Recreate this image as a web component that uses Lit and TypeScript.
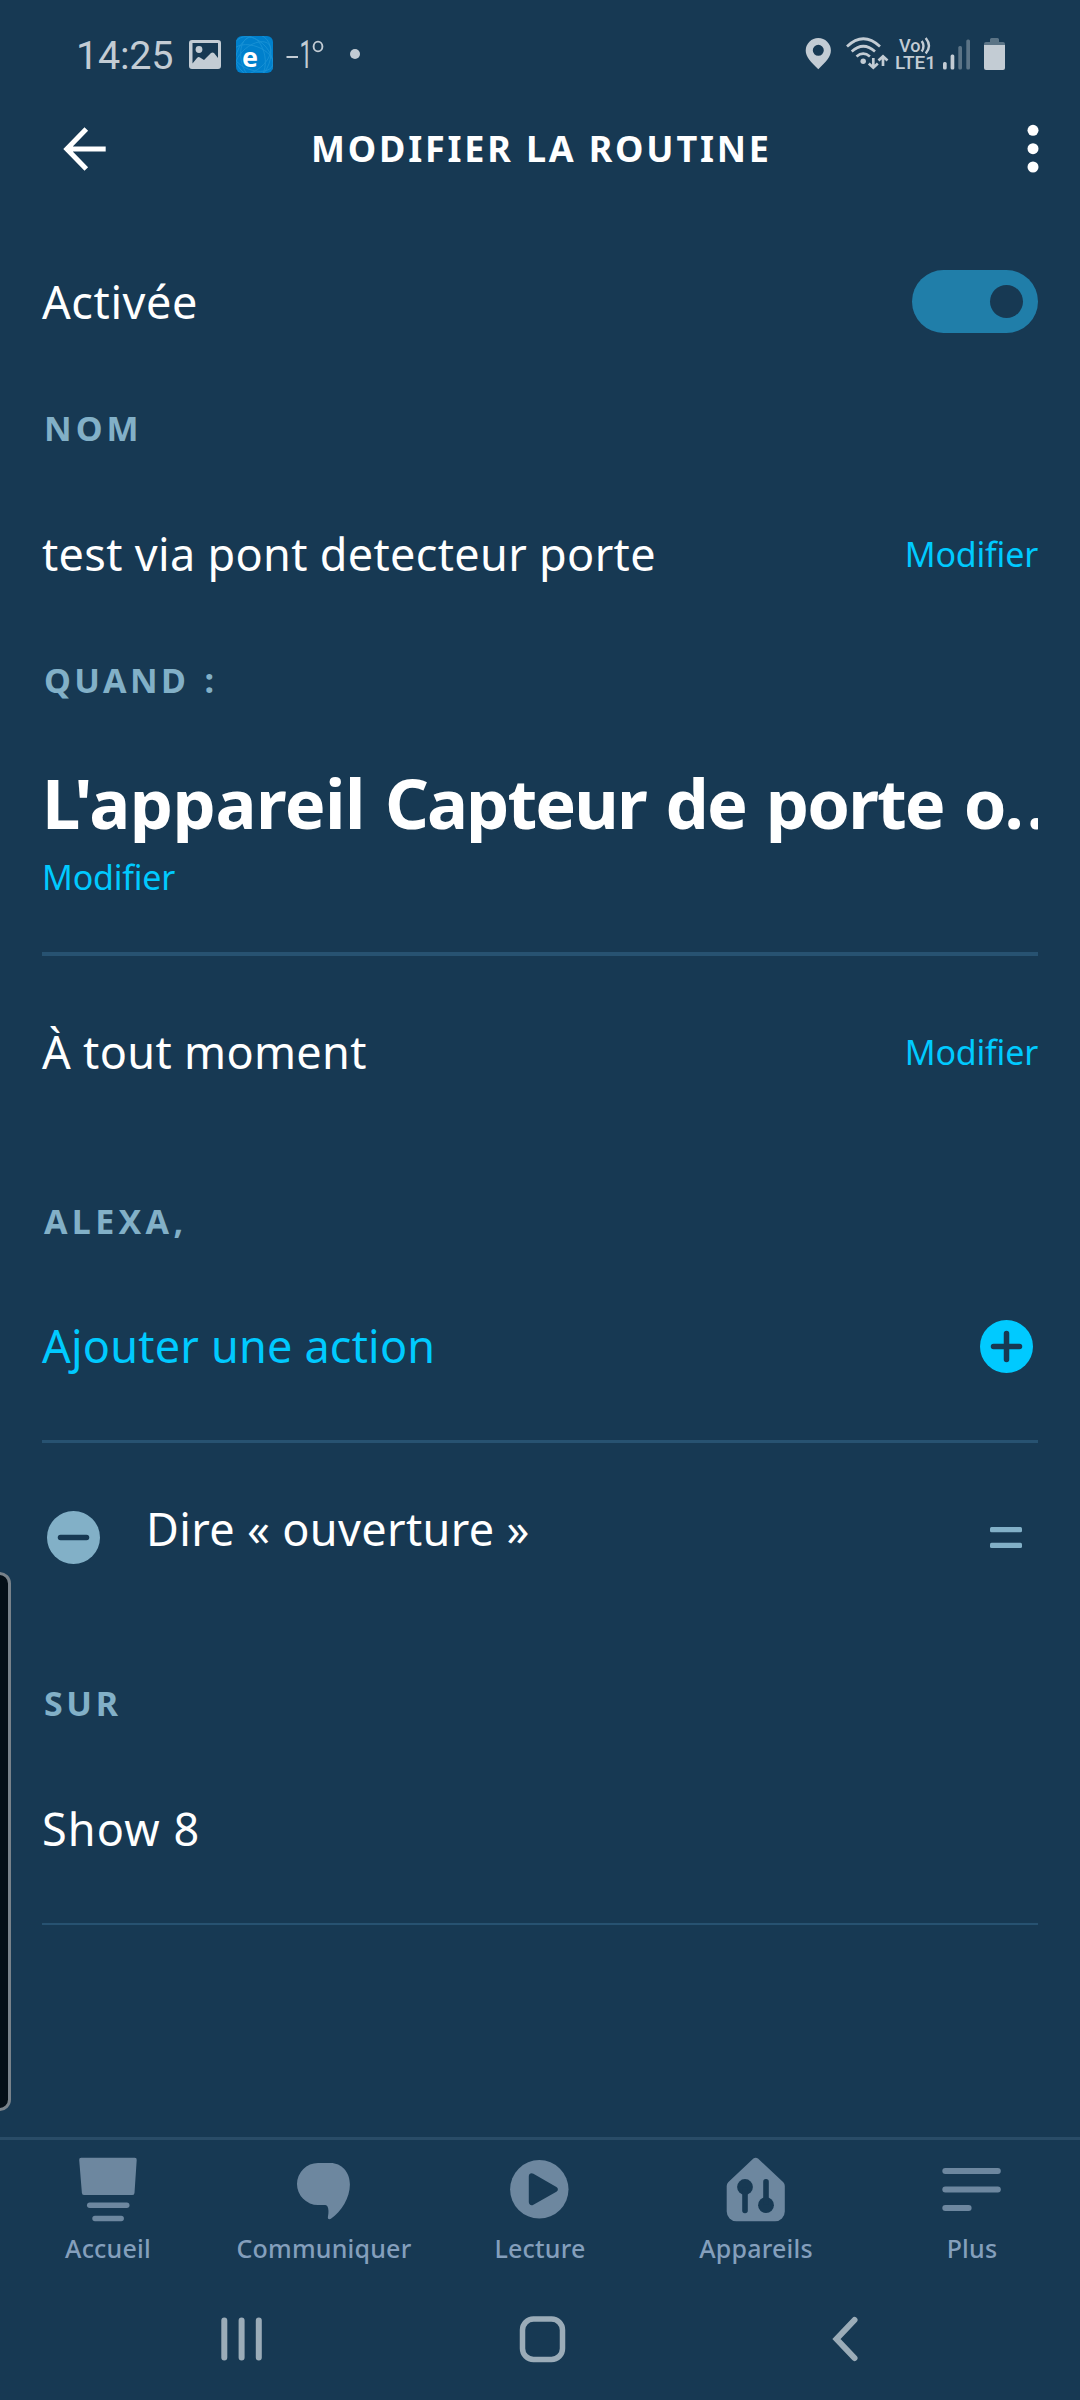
import { LitElement, html, css, svg } from "lit";
import { customElement, property } from "lit/decorators.js";

const BG = "#173953";

@customElement("status-bar")
class StatusBar extends LitElement {
  static styles = css`
    :host {
      display: flex;
      align-items: center;
      justify-content: space-between;
      height: 108px;
      padding: 0 75px;
      box-sizing: border-box;
      color: #c3ccd4;
      fill: currentColor;
      font-family: Roboto, sans-serif;
    }
    .side { display: flex; align-items: center; height: 36px; }
    svg { display: block; flex: none; height: 36px; overflow: visible; }
    .time { width: 113px; padding-left: 1px; font-size: 39.5px; line-height: 36px; padding-top: 3px; letter-spacing: -0.2px; }
    .photo { width: 32px; margin-right: 15px; }
    .logo {
      width: 37px;
      height: 37px;
      margin-right: 13px;
      border-radius: 6px;
      background: #0080cc;
    }
    .logo svg { height: 37px; width: 37px; }
    .logo text { font: 700 27px "Open Sans", sans-serif; fill: #fff; }
    .temp { width: 39px; margin-right: 25px; }
    .temp text { font-size: 38px; font-weight: 400; }
    .more { width: 10px; }
    .pin { width: 27px; margin-right: 14px; }
    .wifi { width: 42px; margin-right: 8px; }
    .volte { width: 39px; margin-right: 8px; }
    .volte text { font-weight: 500; font-size: 18.5px; }
    .signal { width: 28px; margin-right: 13px; }
    .battery { width: 21px; }
    .line { fill: none; stroke: currentColor; }
    .dim { opacity: 0.4; }
  `;

  render() {
    return html`
      <div class="side">
        <span class="time">14:25</span>
        <svg class="photo" viewBox="189 36 32 36">
          <path fill-rule="evenodd" d="M192 40h26a3 3 0 0 1 3 3v23a3 3 0 0 1-3 3h-26a3 3 0 0 1-3-3v-23a3 3 0 0 1 3-3zM192.500 43v20.500l4.500-5.500q1.500-1.500 3-.500l4 2.500 7-7q1.500-1 3 0l4 5v-15z"/>
          <circle cx="199" cy="49.500" r="3.400"/>
        </svg>
        <span class="logo">
          <svg viewBox="0 0 37 37">
            <clipPath id="tile"><rect width="37" height="37" rx="6"/></clipPath>
            <g clip-path="url(#tile)" fill="none" stroke="#1f97d8" stroke-width="0.9" opacity="0.75">
              <ellipse cx="17" cy="22" rx="21" ry="12" transform="rotate(20 17 22)"/>
              <ellipse cx="17" cy="22" rx="21" ry="12" transform="rotate(80 17 22)"/>
              <ellipse cx="17" cy="22" rx="21" ry="12" transform="rotate(140 17 22)"/>
              <ellipse cx="17" cy="22" rx="24" ry="17" transform="rotate(50 17 22)"/>
              <ellipse cx="17" cy="22" rx="24" ry="17" transform="rotate(110 17 22)"/>
            </g>
            <text x="6" y="31">e</text>
          </svg>
        </span>
        <svg class="temp" viewBox="286 36 39 36">
          <rect x="286.500" y="56" width="11.500" height="2"/>
          <text transform="translate(299.400 68) scale(0.600 1)">1</text>
          <ellipse class="line" cx="318" cy="46.500" rx="4.400" ry="4.900" stroke-width="1.900"/>
        </svg>
        <svg class="more" viewBox="350 36 10 36"><circle cx="355" cy="54" r="5"/></svg>
      </div>
      <div class="side">
        <svg class="pin" viewBox="805 36 27 36">
          <path fill-rule="evenodd" d="M818.300 38a12.600 12.600 0 0 1 12.600 12.500c0 6-5 11.500-12.600 18.700-7.600-7.200-12.600-12.700-12.600-18.700A12.600 12.600 0 0 1 818.300 38zM818.300 44.800a5.500 5.500 0 1 0 0 11 5.500 5.500 0 0 0 0-11z"/>
        </svg>
        <svg class="wifi" viewBox="846 36 42 36">
          <g class="line" stroke-width="2.700">
            <path d="M847 46.500q16.300-15.500 33 0M851.700 51.500q11.600-10.500 23.300 0M856.500 56.500q6.700-5.600 13.400 0"/>
            <path d="M873.300 58v9M868.800 63.500l4.500 4.200 4.500-4.200M883 66v-9M878.500 60.500l4.500-4.200 4.500 4.200" stroke-width="2.700"/>
          </g>
          <circle cx="863.200" cy="61.300" r="2.700"/>
        </svg>
        <svg class="volte" viewBox="896 36 39 36">
          <text x="899" y="51.500" textLength="21.500" lengthAdjust="spacingAndGlyphs">Vo</text>
          <text x="895" y="69" textLength="41" lengthAdjust="spacingAndGlyphs">LTE1</text>
          <path class="line" stroke-width="2.400" d="M921.700 41q3.600 5 0 10.500M925.700 38q6.500 8 0 15.500"/>
        </svg>
        <svg class="signal" viewBox="943 36 28 36">
          <rect x="943" y="62" width="3.700" height="7.500" rx="1.500"/>
          <rect x="950.600" y="54.500" width="3.700" height="15" rx="1.500"/>
          <g class="dim">
            <rect x="958.300" y="46" width="3.700" height="23.500" rx="1.500"/>
            <rect x="966.300" y="39.500" width="3.700" height="30" rx="1.500"/>
          </g>
        </svg>
        <svg class="battery" viewBox="984 36 21 36">
          <path class="dim" d="M990 39.500a1.500 1.500 0 0 1 1.500-1.500h6a1.500 1.500 0 0 1 1.500 1.500V42h4a2 2 0 0 1 2 2v1h-21v-1a2 2 0 0 1 2-2h4z"/>
          <path d="M984 45h21v23a2 2 0 0 1-2 2h-17a2 2 0 0 1-2-2z"/>
        </svg>
      </div>
    `;
  }
}

@customElement("routine-row")
class RoutineRow extends LitElement {
  @property() text = "";
  @property() link = "";
  static styles = css`
    :host {
      display: flex;
      align-items: center;
      justify-content: space-between;
      box-sizing: border-box;
      font-size: 45px;
      line-height: 60px;
      letter-spacing: 0.33px;
    }
    .link { font-size: 34px; line-height: 46px; letter-spacing: -0.2px; color: #00caff; }
  `;
  render() {
    return html`
      <span>${this.text}</span>
      ${this.link ? html`<span class="link">${this.link}</span>` : html`<slot></slot>`}
    `;
  }
}

const tabs = [
  {
    label: "Accueil",
    x: 75.3,
    icon: svg`<path d="M80.500 2157.700h53.500a2 2 0 0 1 2 2.200l-2.200 33a2.500 2.500 0 0 1-2.500 2.200h-47.600a2.500 2.500 0 0 1-2.500-2.200l-2.700-33a2 2 0 0 1 2-2.200z"/>
      <rect x="86.300" y="2202.500" width="42.500" height="5.500" rx="2.700"/><rect x="91.600" y="2215.700" width="31.600" height="5.500" rx="2.700"/>`,
  },
  {
    label: "Communiquer",
    x: 292,
    icon: svg`<path d="M318 2163h12.500c11 0 19.400 9 19.400 21.500 0 13-8.500 27.500-19 34.200-1.600 1-3.400.300-3-1.800.900-4.300.800-7.700-.400-10.300q-.600-1.600-2.200-1.600H318a21 21 0 0 1 0-42z"/>`,
  },
  {
    label: "Lecture",
    x: 508,
    icon: svg`<circle cx="539.300" cy="2189.300" r="29.200"/>
      <path fill="${BG}" d="M528.800 2176.500c0-2.800 2.400-4 4.600-2.700l23 13.300c2 1.200 2 3.500 0 4.700l-23 13c-2.200 1.300-4.600.100-4.600-2.700z"/>`,
  },
  {
    label: "Appareils",
    x: 724,
    icon: svg`<path d="M753.400 2158.600q2.300-1.900 4.600 0l25.300 23.700q1.500 1.500 1.500 3.700v25.500a9.800 9.800 0 0 1-9.800 9.800h-38.500a9.800 9.800 0 0 1-9.800-9.800V2186q0-2.200 1.500-3.700z"/>
      <g fill="${BG}"><circle cx="745" cy="2187" r="7.900"/><rect x="742.200" y="2187" width="5.600" height="26.200" rx="2.700"/>
      <circle cx="766" cy="2205.200" r="7.900"/><rect x="763.200" y="2179" width="5.600" height="26" rx="2.700"/></g>`,
  },
  {
    label: "Plus",
    x: 940,
    icon: svg`<rect x="942.300" y="2168" width="58.500" height="6" rx="3"/><rect x="942.300" y="2186.500" width="58.500" height="6" rx="3"/><rect x="942.300" y="2205" width="29.300" height="6" rx="3"/>`,
  },
];

@customElement("bottom-tabs")
class BottomTabs extends LitElement {
  static styles = css`
    :host {
      display: grid;
      grid-template-columns: repeat(5, 216px);
      height: 140px;
      box-sizing: border-box;
      border-top: 3px solid #294c67;
      color: #849fbc;
      flex: none;
    }
    .tab { display: flex; flex-direction: column; align-items: center; padding-top: 17px; }
    svg { display: block; width: 64px; height: 66px; fill: #6d879f; }
    .label { margin-top: 9px; font-size: 25px; font-weight: 500; line-height: 32px; letter-spacing: 0.2px; }
  `;
  render() {
    return tabs.map(
      (t) => html`<div class="tab">
        <svg viewBox="${t.x} 2157 64 66">${t.icon}</svg>
        <span class="label">${t.label}</span>
      </div>`
    );
  }
}

@customElement("app-root")
export class AppRoot extends LitElement {
  static styles = css`
    :host {
      display: flex;
      flex-direction: column;
      position: relative;
      width: 1080px;
      height: 2400px;
      overflow: hidden;
      background: #173953;
      color: #fff;
      font-family: "Noto Sans", "Open Sans", sans-serif;
    }
    svg { display: block; flex: none; }
    header {
      display: flex;
      align-items: center;
      height: 81px;
      padding: 0 39.500px 0 63px;
    }
    h1 { margin: 0 auto 0 204px; font-size: 36px; line-height: 48px; font-weight: 700; letter-spacing: 2.8px; }
    .back { width: 44px; height: 44px; }
    .dots { width: 16px; height: 52px; }
    main { flex: 1; display: flex; flex-direction: column; padding: 49px 42px 0; }
    .label {
      box-sizing: border-box;
      display: flex;
      align-items: center;
      flex: none;
      font-size: 34px;
      line-height: 46px;
      font-weight: 700;
      letter-spacing: 4.3px;
      color: #82b0c7;
      padding-left: 2px;
    }
    .name { height: 126px; letter-spacing: 4px; }
    .when { height: 128px; letter-spacing: 3.4px; word-spacing: 3px; }
    .alexa { height: 105px; padding-top: 43px; }
    .on { height: 102px; padding-top: 40px; letter-spacing: 3.6px; }
    .toggle {
      display: flex;
      justify-content: flex-end;
      align-items: center;
      width: 126px;
      height: 63px;
      box-sizing: border-box;
      padding-right: 15px;
      border-radius: 32px;
      background: #207ea9;
    }
    .knob { width: 33px; height: 33px; border-radius: 50%; background: #173953; }
    .enabled { height: 127px; letter-spacing: 0.6px; }
    .title-row { height: 125px; }
    .trigger { flex: none; height: 212px; box-sizing: border-box; padding-top: 19px; border-bottom: 4px solid #275271; }
    h2 {
      margin: 0;
      overflow: hidden;
      white-space: nowrap;
      font-size: 68.5px;
      line-height: 80px;
      font-weight: 700;
      letter-spacing: -1.9px;
      word-spacing: 4px;
    }
    .lead { letter-spacing: -0.5px; }
    .ellipsis { letter-spacing: 3px; }
    .link { margin-top: 11px; font-size: 34px; line-height: 46px; letter-spacing: -0.2px; color: #00caff; }
    .anytime { height: 191px; }
    .add { height: 191px; border-bottom: 3px solid #275271; color: #00caff; letter-spacing: 0.2px; }
    .round { width: 53px; height: 53px; }
    .add .round { margin-right: 5px; }
    .action { display: flex; align-items: center; height: 189px; padding: 0 16px 0 5px; }
    .phrase { flex: 1; margin-left: 46px; padding-bottom: 18px; font-size: 45px; line-height: 60px; letter-spacing: 0.35px; }
    .drag { width: 32px; height: 21px; }
    .device { height: 191px; border-bottom: 2px solid #275271; letter-spacing: 1.1px; }
    .edge {
      position: absolute;
      left: -12px;
      top: 1572px;
      width: 23px;
      height: 539px;
      box-sizing: border-box;
      border: 3px solid #78828a;
      border-radius: 12px;
      background: #040f17;
    }
    .system { flex: none; display: flex; align-items: center; justify-content: space-between; height: 123px; padding: 0 221px; }
    .system svg { height: 48px; stroke: #9bacb8; stroke-width: 6; fill: none; stroke-linecap: round; }
    .recents { width: 42px; }
    .system .home { width: 47px; margin-left: -9px; stroke-width: 5.500; }
    .prev { width: 28px; }
  `;

  render() {
    return html`
      <status-bar></status-bar>
      <header>
        <svg class="back" viewBox="0 0 44 44" fill="none" stroke="#fff" stroke-width="5">
          <path d="M42.700 22H4M23.300 2l-19.500 20 19.500 20"/>
        </svg>
        <h1>MODIFIER LA ROUTINE</h1>
        <svg class="dots" viewBox="0 0 16 52" fill="#fff">
          <circle cx="8" cy="7.300" r="5.500"/><circle cx="8" cy="25.700" r="5.500"/><circle cx="8" cy="44" r="5.500"/>
        </svg>
      </header>
      <main>
        <routine-row class="enabled" text="Activée"><span class="toggle"><span class="knob"></span></span></routine-row>
        <div class="label name">NOM</div>
        <routine-row class="title-row" text="test via pont detecteur porte" link="Modifier"></routine-row>
        <div class="label when">QUAND :</div>
        <section class="trigger">
          <h2><span class="lead">L'appareil</span> Capteur de porte o<span class="ellipsis">...</span></h2>
          <div class="link">Modifier</div>
        </section>
        <routine-row class="anytime" text="À tout moment" link="Modifier"></routine-row>
        <div class="label alexa">ALEXA,</div>
        <routine-row class="add" text="Ajouter une action">
          <svg class="round" viewBox="0 0 53 53">
            <circle cx="26.500" cy="26.500" r="26.500" fill="#00caff"/>
            <path d="M13.500 26.500h26M26.500 13.500v26" stroke="#173953" stroke-width="5.500" stroke-linecap="round"/>
          </svg>
        </routine-row>
        <div class="action">
          <svg class="round" viewBox="0 0 53 53">
            <circle cx="26.500" cy="26.500" r="26.500" fill="#82b0c7"/>
            <path d="M13.500 26.500h26" stroke="#173953" stroke-width="5.500" stroke-linecap="round"/>
          </svg>
          <span class="phrase">Dire « ouverture »</span>
          <svg class="drag" viewBox="0 0 32 21" fill="#82b0c7">
            <rect width="32" height="5.300" rx="1.500"/><rect y="15.700" width="32" height="5.300" rx="1.500"/>
          </svg>
        </div>
        <div class="label on">SUR</div>
        <routine-row class="device" text="Show 8"></routine-row>
      </main>
      <bottom-tabs></bottom-tabs>
      <nav class="system">
        <svg class="recents" viewBox="0 0 42 48"><path d="M3.300 5.500v37M20.600 5.500v37M37.800 5.500v37"/></svg>
        <svg class="home" viewBox="0 0 47 48"><rect x="3.500" y="4" width="40" height="40.500" rx="11"/></svg>
        <svg class="prev" viewBox="0 0 28 48"><path d="M23.500 5L5.500 24l18 19" stroke-linejoin="miter"/></svg>
      </nav>
      <div class="edge"></div>
    `;
  }
}
